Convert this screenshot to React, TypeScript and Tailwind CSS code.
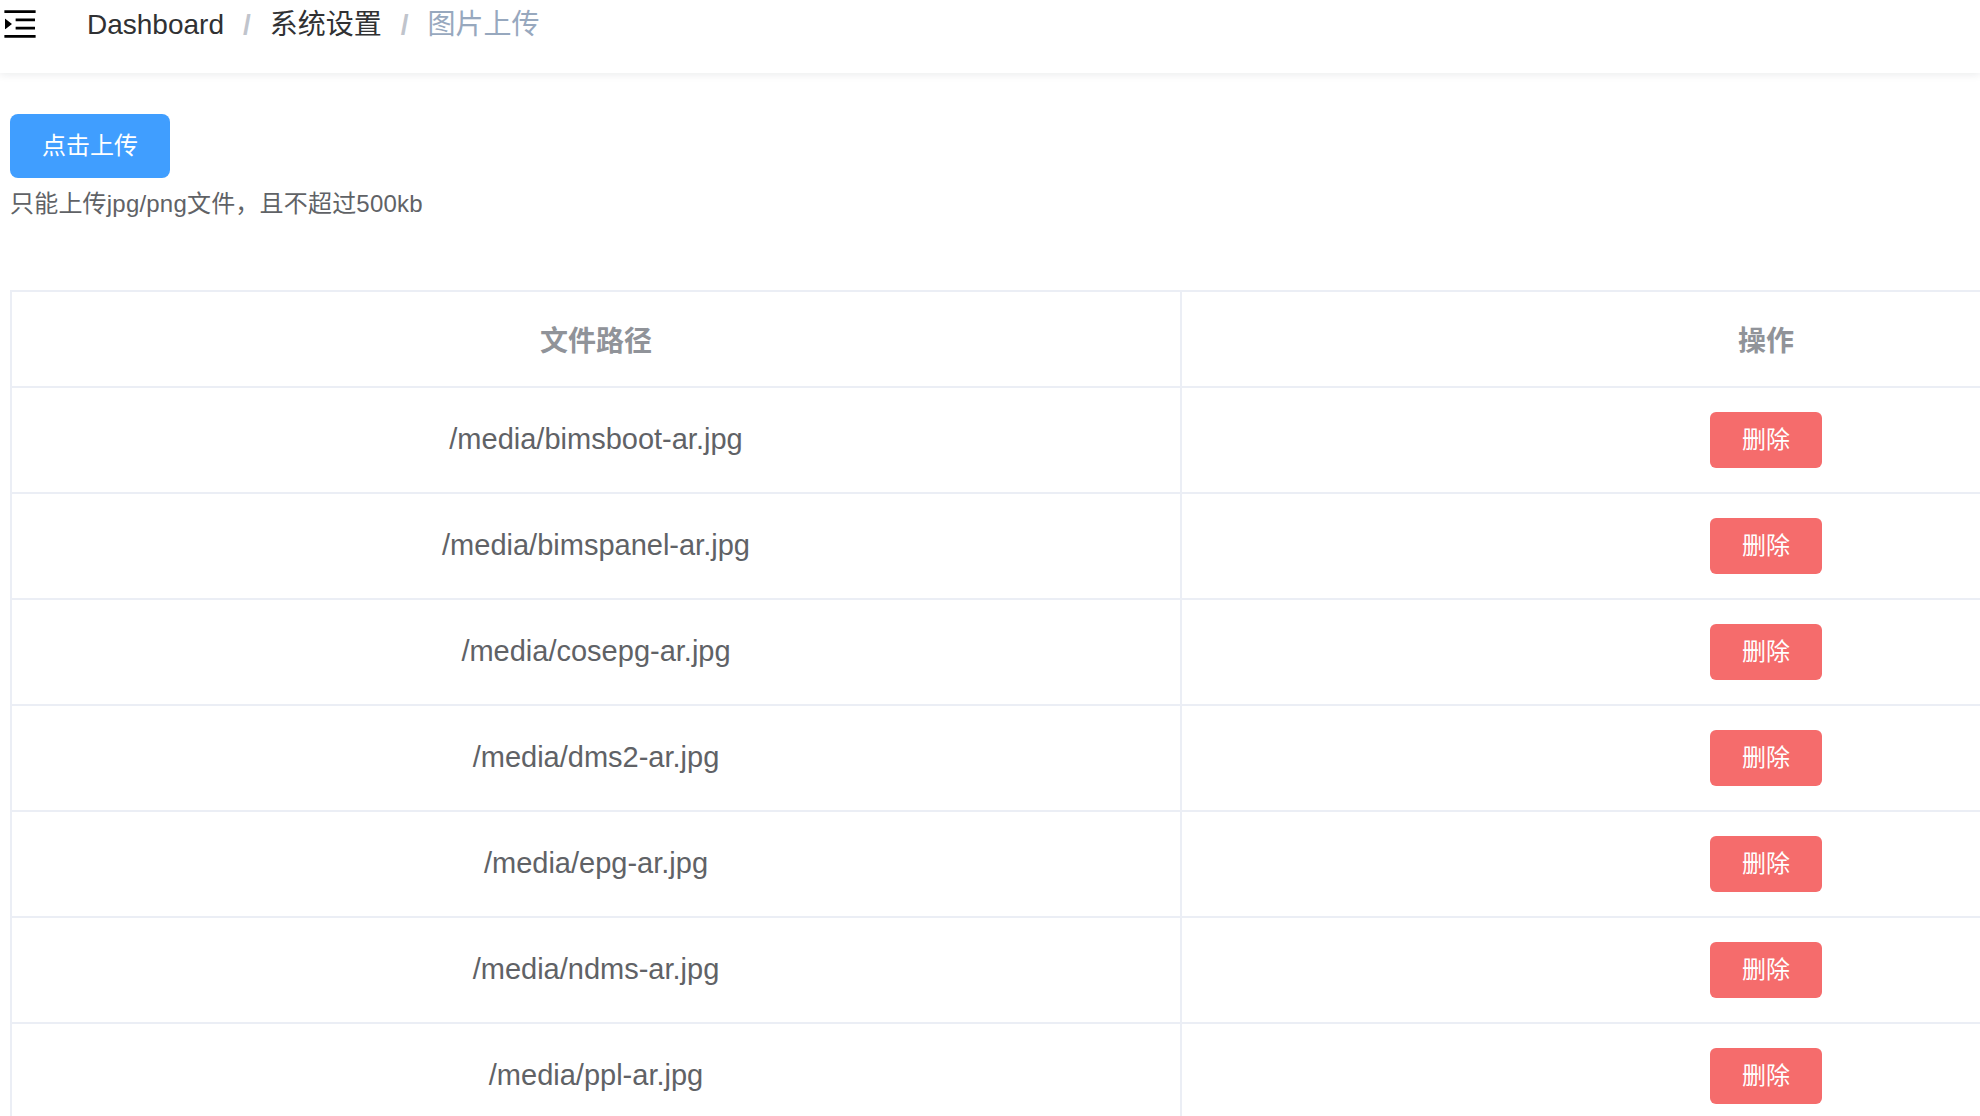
const files = [
  "/media/bimsboot-ar.jpg",
  "/media/bimspanel-ar.jpg",
  "/media/cosepg-ar.jpg",
  "/media/dms2-ar.jpg",
  "/media/epg-ar.jpg",
  "/media/ndms-ar.jpg",
  "/media/ppl-ar.jpg",
];

const font = "font-['Liberation_Sans','Noto_Sans_CJK_SC',sans-serif]";

function Hamburger() {
  return (
    <svg viewBox="0 0 1024 1024" className="w-[40px] h-[40px] mt-[4px] shrink-0" fill="#000">
      <path d="M408 442h480c4.4 0 8-3.6 8-8v-56c0-4.4-3.6-8-8-8H408c-4.4 0-8 3.6-8 8v56c0 4.4 3.6 8 8 8zm-8 204c0 4.4 3.6 8 8 8h480c4.4 0 8-3.6 8-8v-56c0-4.4-3.6-8-8-8H408c-4.4 0-8 3.6-8 8v56zm504-486H120c-4.4 0-8 3.6-8 8v56c0 4.4 3.6 8 8 8h784c4.4 0 8-3.6 8-8v-56c0-4.4-3.6-8-8-8zm0 632H120c-4.4 0-8 3.6-8 8v56c0 4.4 3.6 8 8 8h784c4.4 0 8-3.6 8-8v-56c0-4.4-3.6-8-8-8zM142.4 642.1L298.7 519a8.84 8.84 0 0 0 0-13.9L142.4 381.9c-5.8-4.6-14.4-.5-14.4 6.9v246.3a8.9 8.9 0 0 0 14.4 7z" />
    </svg>
  );
}

function Separator() {
  return <span className="mx-[19px] font-bold text-[#C0C4CC]">/</span>;
}

export default function App() {
  return (
    <div className={`w-full h-[1116px] overflow-hidden bg-white ${font}`}>
      {/* Navbar */}
      <div className="relative z-10 h-[73px] flex items-start bg-white shadow-[0_2px_8px_rgba(0,21,41,0.08)]">
        <Hamburger />
        <div className="ml-[47px] text-[28px] leading-[50px] whitespace-nowrap">
          <span className="text-[#303133]">Dashboard</span>
          <Separator />
          <span className="text-[#303133]">系统设置</span>
          <Separator />
          <span className="text-[#97A8BE]">图片上传</span>
        </div>
      </div>

      {/* Content */}
      <div className="pl-[10px] pt-[41px]">
        <button className="w-[160px] h-[64px] rounded-[8px] bg-[#409EFF] text-white text-[24px]">
          点击上传
        </button>
        <div className="mt-[8px] text-[24px] leading-[36px] text-[#606266] tracking-[0.2px]">
          只能上传jpg/png文件，且不超过500kb
        </div>

        <div className="mt-[68px] w-[2342px] border-l-2 border-t-2 border-[#EBEEF5] grid grid-cols-[1170px_1170px]">
          <div className="h-[96px] pt-[5px] flex items-center justify-center border-r-2 border-b-2 border-[#EBEEF5] text-[28px] font-bold text-[#909399]">
            文件路径
          </div>
          <div className="h-[96px] pt-[5px] flex items-center justify-center border-r-2 border-b-2 border-[#EBEEF5] text-[28px] font-bold text-[#909399]">
            操作
          </div>
          {files.map((f) => (
            <div key={f} className="contents">
              <div className="h-[106px] flex items-center justify-center border-r-2 border-b-2 border-[#EBEEF5] text-[29px] text-[#606266]">
                {f}
              </div>
              <div className="h-[106px] flex items-center justify-center border-r-2 border-b-2 border-[#EBEEF5]">
                <button className="w-[112px] h-[56px] rounded-[6px] bg-[#F56C6C] text-white text-[24px]">
                  删除
                </button>
              </div>
            </div>
          ))}
        </div>
      </div>
    </div>
  );
}
